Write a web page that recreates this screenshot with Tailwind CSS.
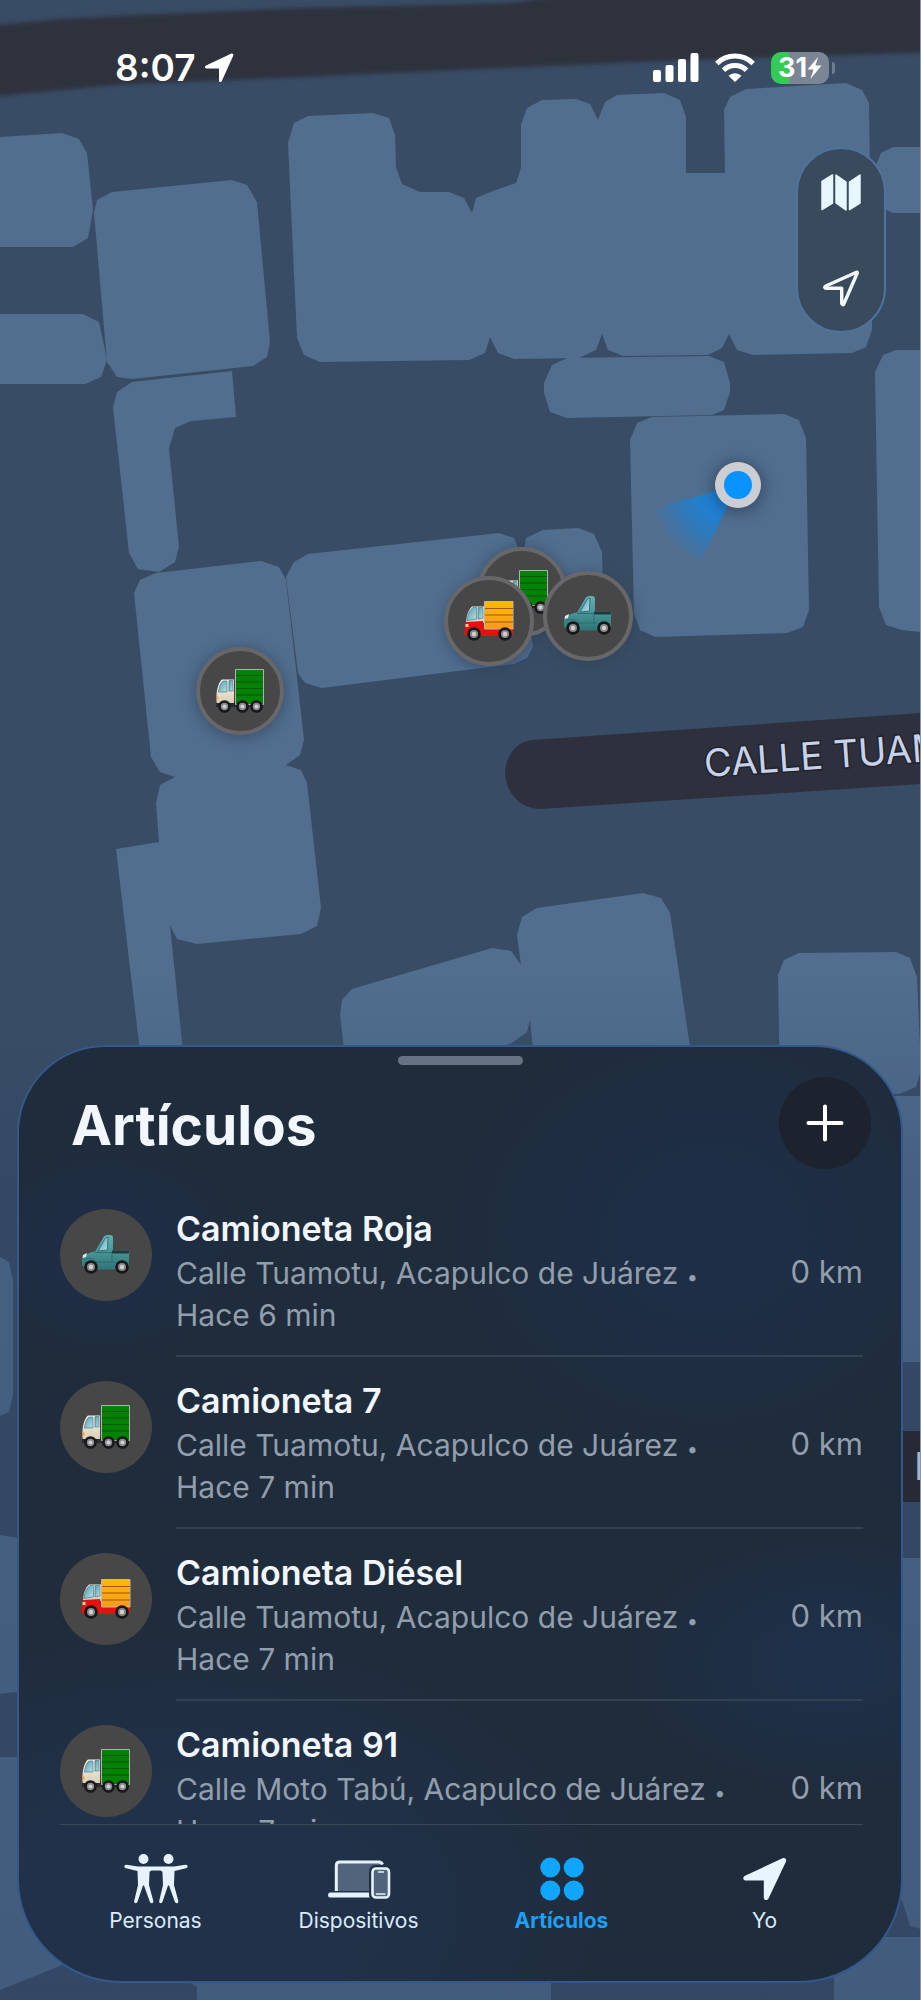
<!DOCTYPE html>
<html lang="es">
<head>
<meta charset="utf-8">
<meta name="viewport" content="width=device-width, initial-scale=1">
<title>Artículos</title>
<script src="https://cdn.jsdelivr.net/npm/@tailwindcss/browser@4"></script>
</head>
<body class="bg-[#384d65] font-['Inter',sans-serif]">

<!-- Shared vehicle drawings -->
<svg class="absolute size-0" aria-hidden="true">
  <defs>
    <linearGradient id="glass" x1="0" y1="0" x2="1" y2="1"><stop offset="0" stop-color="#4f9bb0"/><stop offset="1" stop-color="#b5e2ea"/></linearGradient>
    <linearGradient id="cream" x1="0" y1="0" x2="0" y2="1"><stop offset="0" stop-color="#f7f3e6"/><stop offset="1" stop-color="#d9cfb8"/></linearGradient>
    <linearGradient id="teal" x1="0" y1="0" x2="0" y2="1"><stop offset="0" stop-color="#5fb3b5"/><stop offset="1" stop-color="#2f7476"/></linearGradient>
    <linearGradient id="amber" x1="0" y1="0" x2="0" y2="1"><stop offset="0" stop-color="#ffb80a"/><stop offset="1" stop-color="#f79a1c"/></linearGradient>
    <symbol id="wheel" viewBox="0 0 14 14">
      <circle cx="7" cy="7" r="6.8" fill="#17181a"/><circle cx="7" cy="7" r="4" fill="#8a8a8e"/><circle cx="7" cy="7" r="2.2" fill="#cfcfd2"/>
    </symbol>
    <symbol id="truck-green" viewBox="0 0 50 44">
      <path d="M1 32h47v6H1z" fill="#2a2b2e"/>
      <path d="M20.500 .5h28v35h-28z" fill="#058205" stroke="#a9b5a9"/>
      <path d="M21 6.500h27M21 13h27M21 19.500h27M21 26h27" stroke="#04560a" stroke-width="1"/>
      <path d="M7 10.500h12V34H1.500v-9C2 19 4 13 7 10.500z" fill="url(#cream)"/>
      <path d="M8 12h4v11H3.500C4 18 5.500 14 8 12z" fill="url(#glass)" stroke="#3a6f7c" stroke-width=".6"/>
      <path d="M14 11.500h4V22h-4z" fill="url(#glass)" stroke="#3a6f7c" stroke-width=".6"/>
      <path d="M1.500 27l2.500 1.500-2.500 3z" fill="#f39a3a"/>
      <use href="#wheel" x="3" y="31" width="13" height="13"/>
      <use href="#wheel" x="21" y="31" width="13" height="13"/>
      <use href="#wheel" x="35" y="31" width="13" height="13"/>
    </symbol>
    <symbol id="truck-orange" viewBox="0 0 50 44">
      <path d="M8 7.500h12V24H2c0-6 2-13 6-16.500z" fill="url(#cream)"/>
      <path d="M9 8.500h3.500V20L2.800 21.500C3.500 16 5.500 11 9 8.500z" fill="url(#glass)" stroke="#3a6f7c" stroke-width=".6"/>
      <path d="M14 8.500h5V19l-5 1z" fill="url(#glass)" stroke="#3a6f7c" stroke-width=".6"/>
      <path d="M2 23l17-1 1 7h29v6l-2 2H3l-3-2z" fill="#e31212"/>
      <path d="M1.500 25h3v3h-3z" fill="#f6c9a0"/>
      <path d="M20.500 2.500h28.500v27.500h-28.500z" fill="url(#amber)" stroke="#c9b39a"/>
      <path d="M21 9.500h28M21 16h28M21 23h28" stroke="#9a5a06" stroke-width="1"/>
      <use href="#wheel" x="3" y="28" width="14" height="14"/>
      <use href="#wheel" x="34" y="28" width="14" height="14"/>
    </symbol>
    <symbol id="pickup" viewBox="0 0 50 44">
      <path d="M14 18.500L22 5c1-1.800 2.500-3 5-3h2c2 0 3 1 3 3v12.500h16.500l.5 2-1 2v10l-2 5H5l-4-4v-6c1-4 5-6.500 13-8z" fill="url(#teal)"/>
      <path d="M17 18L23.500 6.500c1-1.500 2-2.500 3.500-2.500l-.7 13z" fill="url(#glass)" stroke="#2b6062" stroke-width=".8"/>
      <path d="M31 17.500h17.500v3H31z" fill="#1f3b3d"/>
      <path d="M14 19.500h17v10M3 27c4-3 10-2 12 2h19" fill="none" stroke="#2c6a6c" stroke-width=".9"/>
      <path d="M2 22l4-2-1 4-3.500 1z" fill="#d8eef0"/>
      <use href="#wheel" x="3" y="27" width="14" height="14"/>
      <use href="#wheel" x="34" y="27" width="14" height="14"/>
    </symbol>
  </defs>
</svg>

<main class="relative flex min-h-screen flex-col overflow-hidden">

  <!-- Map canvas -->
  <svg class="absolute inset-0 h-full w-full" viewBox="0 0 921 2000" preserveAspectRatio="xMidYMin slice" role="img" aria-label="Mapa">
    <defs>
      <linearGradient id="dim" x1="0" y1="0" x2="0" y2="1"><stop offset="0" stop-color="#2b3f63" stop-opacity="0"/><stop offset=".2" stop-color="#2b3f63" stop-opacity=".3"/><stop offset="1" stop-color="#2b3f63" stop-opacity=".38"/></linearGradient>
      <radialGradient id="beam" gradientUnits="userSpaceOnUse" cx="738" cy="485" r="92"><stop offset=".25" stop-color="#1488e8" stop-opacity=".95"/><stop offset=".65" stop-color="#1c7fd0" stop-opacity=".65"/><stop offset="1" stop-color="#2a7cc4" stop-opacity="0"/></radialGradient>
      <filter id="soft" x="-40%" y="-40%" width="180%" height="180%"><feGaussianBlur stdDeviation="7"/></filter>
      <filter id="haze"><feGaussianBlur stdDeviation="2"/></filter>
    </defs>
    <rect width="921" height="2000" fill="#384d65"/>
    <path d="M-10 26L60 19L138 15L300 8L511 3L600-10H940V52L640 62L235 80L117 85L-10 97z" fill="#2e323e" filter="url(#haze)"/>

    <g fill="#516e8f">
      <path d="M0 137L62 133L79 139L87 153L93 210L88 238L73 247H0z"/>
      <path d="M112 192L232 180L247 185L257 202L270 342L267 357L253 366L132 379L117 377L107 362L94 213L97 200z"/>
      <path d="M0 314H83L99 322L107 360L101 377L85 384H0z"/>
      <path d="M132 382L232 371L236 417L191 421L175 428L169 448L179 547L175 562L159 572L138 569L129 553L113 407L117 392z"/>
      <path d="M294 123L308 116L373 113L389 118L395 135L396 167L402 184L420 192H449L464 198L472 213L476 198L493 191L516 183L521 168V125L527 108L542 100L576 99L590 104L598 120L605 102L617 95L664 93L680 100L686 117V173H725L724 110L730 97L746 89L846 83L862 90L869 103L872 330L866 347L852 353L753 355L737 350L729 334L722 348L708 355L623 356L608 350L602 334L596 350L579 358L514 359L498 353L490 337L485 353L469 360L320 362L304 355L297 338L288 143z"/>
      <path d="M876 165L881 153L893 147H921V213H893L876 205z"/>
      <path d="M552 365L567 358L709 356L724 362L730 383V392L724 410L712 415L567 418L550 412L544 393V383z"/>
      <path d="M875 372L883 355L896 350H921V632L902 630L886 625L879 607z"/>
      <path d="M637 423L652 417L784 414L799 420L806 438L809 610L803 627L787 633L655 637L640 630L634 613L630 440z"/>
      <path d="M294 562L308 554L499 533L514 538L519 550L533 647L527 658L514 664L322 688L305 683L298 673L286 577z"/>
      <path d="M526 538L543 530L578 528L594 534L602 552L603 600L540 620L523 555z"/>
      <path d="M156 573L261 561L279 567L286 580L304 740L300 755L286 765L301 770L307 783L321 908L317 926L301 934L197 944L177 939L170 925L190 1120H148L116 849L159 842L156 803L160 785L175 777L160 772L151 757L134 593L140 580z"/>
      <path d="M352 989L492 948L511 951L521 965L517 935L522 917L537 908L643 893L661 898L670 913L692 1060L700 1100H538L530 1020L527 1032L512 1043L350 1100L340 1015L342 1000z"/>
      <path d="M778 975L784 960L799 953L896 952L910 958L917 977L921 1070L916 1087L899 1094H780z"/>
      <path d="M880 1096H921V1362H880z"/>
      <path d="M880 1558H921V1929L910 1926L902 1900H880z"/>
      <path d="M834 1937H921V2000H834z"/>
      <path d="M0 1257L9 1262L13 1280V1395L9 1412L0 1416z"/>
      <path d="M0 1535L30 1540V1690L0 1694z"/>
      <path d="M0 1757H60V1900L197 1987V2000H551V1950H100L0 1990z"/>
    </g>
    <path d="M0 1990L197 1987V2000H0z" fill="#384d65"/>
    <rect y="975" width="921" height="1025" fill="url(#dim)"/>

    <path d="M532 740L921 713V784L540 809C520 809 506 793 505 773C506 755 516 742 532 740z" fill="#2e313d"/>
    <text x="705" y="777" transform="rotate(-4 705 777)" font-family="Inter, sans-serif" font-size="38" fill="#c9d1e8" stroke="#20232c" stroke-width="3" paint-order="stroke">CALLE TUAMOTU</text>
    <path d="M880 1431H921V1502H880z" fill="#262a35"/>
    <text x="914" y="1480" font-family="Inter, sans-serif" font-size="38" fill="#aab2c8">M</text>

    <!-- Current position -->
    <path d="M738 485L655 508Q664 545 700 562z" fill="url(#beam)"/>
    <circle cx="738" cy="487" r="27" fill="#24364c" opacity=".5" filter="url(#soft)"/>
    <circle cx="738" cy="485" r="23" fill="#cdced4"/>
    <circle cx="738" cy="485" r="14" fill="#0a92ff"/>

    <!-- Vehicle pins -->
    <g fill="#2a3c52" opacity=".55" filter="url(#soft)">
      <circle cx="240" cy="693" r="46"/><circle cx="522" cy="592" r="46"/><circle cx="490" cy="624" r="46"/><circle cx="588" cy="618" r="46"/>
    </g>
    <g fill="#474748" stroke="#67676a" stroke-width="4">
      <circle cx="240" cy="691" r="42"/>
      <circle cx="522" cy="592" r="43"/>
    </g>
    <use href="#truck-green" x="215" y="669" width="50" height="44"/>
    <use href="#truck-green" x="499" y="570" width="50" height="44"/>
    <circle cx="489" cy="621" r="43" fill="#474748" stroke="#67676a" stroke-width="4"/>
    <use href="#truck-orange" x="464" y="599" width="50" height="44"/>
    <circle cx="588" cy="616" r="43" fill="#474748" stroke="#67676a" stroke-width="4"/>
    <use href="#pickup" x="563" y="594" width="50" height="44"/>
    <rect x="920" width="1" height="2000" fill="#8796aa"/>
  </svg>

  <!-- Status bar -->
  <header class="relative flex items-center justify-between pt-[46px] pr-[86px] pl-[115px] text-white">
    <div class="flex h-11 items-center gap-2">
      <time class="text-[37px] leading-[44px] font-semibold">8:07</time>
      <svg class="h-[30px] w-[30px]" viewBox="0 0 30 30" fill="#fff"><path d="M27 .8c1.600-.7 2.800.5 2.200 2L17.800 28c-.7 1.600-2.800 1.400-2.800-.5V15.500H2.500c-2 0-2.200-2.100-.5-2.900z"/></svg>
    </div>
    <div class="flex h-11 items-center gap-4">
      <svg class="h-[30px] w-[46px]" viewBox="0 0 46 30" fill="#fff"><rect y="17" width="8" height="12" rx="2"/><rect x="12.500" y="12" width="8" height="17" rx="2"/><rect x="25" y="6" width="8" height="23" rx="2"/><rect x="37.500" y="0" width="8" height="29" rx="2"/></svg>
      <svg class="h-[30px] w-10" viewBox="0 0 40 30" fill="none" stroke="#fff" stroke-width="5"><path d="M1.800 10.500a26 26 0 0 1 36.400 0"/><path d="M8.500 17.200a16.500 16.500 0 0 1 23 0"/><path d="M20 29l-6.500-6.300a9.500 9.500 0 0 1 13 0z" fill="#fff" stroke="none"/></svg>
      <div class="flex items-center gap-[3px]">
        <div class="flex h-8 w-[58px] items-center justify-center rounded-[10px] bg-[linear-gradient(90deg,#32cb55_31%,#7b8594_31%)] text-[27px] leading-8 font-bold">31<svg class="h-[22px] w-[15px]" viewBox="0 0 15 22" fill="#fff"><path d="M11 0L.5 12.500H6.500L3.500 22L14.500 8.500H8.500z"/></svg></div>
        <div class="h-3 w-[3px] rounded-r-full bg-[#6f7c8e]"></div>
      </div>
    </div>
  </header>

  <!-- Map controls -->
  <div class="relative mt-[57px] mr-[35px] flex w-[90px] flex-col gap-[10px] self-end rounded-full border-2 border-[#4d739e] bg-[#394a5c]">
    <button type="button" aria-label="Tipo de mapa" class="flex h-[86px] items-center justify-center">
      <svg class="h-[37px] w-10" viewBox="0 0 40 37" fill="#e8f6ff" stroke="#e8f6ff" stroke-width="1.500" stroke-linejoin="round"><path d="M1 7.500L11.500 1V29L1 35.500z"/><path d="M15 1L25 8V36L15 29z"/><path d="M28.500 8L39 1V29L28.500 35.500z"/></svg>
    </button>
    <button type="button" aria-label="Mi ubicación" class="flex h-[86px] items-center justify-center">
      <svg class="h-[37px] w-9" viewBox="0 0 36 37" fill="none" stroke="#f1f8ff" stroke-width="3.400" stroke-linejoin="round"><path d="M33.500 2.300C34.300 2 34.500 2.500 34.200 3.300L21 33.500C20.300 35.200 18.700 35 18.700 33.200V18.300H3.200C1.500 18.300 1.200 16.800 2.800 16z"/></svg>
    </button>
  </div>

  <!-- Bottom sheet -->
  <section class="relative mr-[18px] ml-[17px] mt-auto mb-[17px] flex flex-col overflow-hidden rounded-t-[88px] rounded-b-[104px] border-2 border-[#34588a] bg-[#1f2c3c] bg-[radial-gradient(ellipse_30%_24%_at_78%_20%,#1e2e46_30%,transparent),radial-gradient(ellipse_16%_12%_at_10%_22%,#1e2e47_20%,transparent),radial-gradient(ellipse_50%_30%_at_18%_92%,#203149_40%,transparent),radial-gradient(ellipse_24%_14%_at_92%_66%,#1e3049_20%,transparent)]">
    <div class="mx-auto mt-[9px] h-[9px] w-[125px] rounded-full bg-[#677384]"></div>
    <div class="mt-3 mb-4 flex items-center justify-between pr-[30px] pl-[52px]">
      <h1 class="pt-1 text-[55px] leading-[68px] font-bold text-[#f2f6ff]">Artículos</h1>
      <button type="button" aria-label="Agregar" class="flex size-[92px] items-center justify-center rounded-full bg-[#1c232e]">
        <svg class="size-[38px]" viewBox="0 0 38 38" stroke="#fff" stroke-width="4" stroke-linecap="round"><path d="M19 2.500V35.500M2.500 19H35.500"/></svg>
      </button>
    </div>

    <ul class="max-h-[639px] overflow-y-auto pr-[38px] pl-[41px] [scrollbar-width:none]">
      <li class="flex gap-6">
        <span class="mt-6 flex size-[92px] shrink-0 items-center justify-center rounded-full bg-[#474748]"><svg class="h-11 w-[50px]"><use href="#pickup"/></svg></span>
        <div class="flex grow items-center justify-between border-b-2 border-[#334152] pt-[23px] pb-[19px]">
          <div>
            <h2 class="text-[34px] leading-[42px] font-semibold text-[#f2f6ff]">Camioneta Roja</h2>
            <p class="mt-0.5 text-[30px] leading-[42px] text-[#939eac]">Calle Tuamotu, Acapulco de Juárez <span class="text-xl">•</span><br>Hace 6 min</p>
          </div>
          <span class="text-[31px] leading-[42px] whitespace-nowrap text-[#939eac]">0 km</span>
        </div>
      </li>
      <li class="flex gap-6">
        <span class="mt-6 flex size-[92px] shrink-0 items-center justify-center rounded-full bg-[#474748]"><svg class="h-11 w-[50px]"><use href="#truck-green"/></svg></span>
        <div class="flex grow items-center justify-between border-b-2 border-[#334152] pt-[23px] pb-[19px]">
          <div>
            <h2 class="text-[34px] leading-[42px] font-semibold text-[#f2f6ff]">Camioneta 7</h2>
            <p class="mt-0.5 text-[30px] leading-[42px] text-[#939eac]">Calle Tuamotu, Acapulco de Juárez <span class="text-xl">•</span><br>Hace 7 min</p>
          </div>
          <span class="text-[31px] leading-[42px] whitespace-nowrap text-[#939eac]">0 km</span>
        </div>
      </li>
      <li class="flex gap-6">
        <span class="mt-6 flex size-[92px] shrink-0 items-center justify-center rounded-full bg-[#474748]"><svg class="h-11 w-[50px]"><use href="#truck-orange"/></svg></span>
        <div class="flex grow items-center justify-between border-b-2 border-[#334152] pt-[23px] pb-[19px]">
          <div>
            <h2 class="text-[34px] leading-[42px] font-semibold text-[#f2f6ff]">Camioneta Diésel</h2>
            <p class="mt-0.5 text-[30px] leading-[42px] text-[#939eac]">Calle Tuamotu, Acapulco de Juárez <span class="text-xl">•</span><br>Hace 7 min</p>
          </div>
          <span class="text-[31px] leading-[42px] whitespace-nowrap text-[#939eac]">0 km</span>
        </div>
      </li>
      <li class="flex gap-6">
        <span class="mt-6 flex size-[92px] shrink-0 items-center justify-center rounded-full bg-[#474748]"><svg class="h-11 w-[50px]"><use href="#truck-green"/></svg></span>
        <div class="flex grow items-center justify-between pt-[23px] pb-[19px]">
          <div>
            <h2 class="text-[34px] leading-[42px] font-semibold text-[#f2f6ff]">Camioneta 91</h2>
            <p class="mt-0.5 text-[30px] leading-[42px] text-[#939eac]">Calle Moto Tabú, Acapulco de Juárez <span class="text-xl">•</span><br>Hace 7 min</p>
          </div>
          <span class="text-[31px] leading-[42px] whitespace-nowrap text-[#939eac]">0 km</span>
        </div>
      </li>
    </ul>

    <div class="mr-[38px] ml-[41px] h-px bg-[#3a4858]"></div>
    <nav class="grid grid-cols-4 px-[35px] pt-[27px] pb-[46px] text-[21px] leading-7 text-[#dcebfb]">
      <a href="#personas" class="flex flex-col items-center gap-[3px]">
        <svg class="h-[52px] w-16" viewBox="0 0 64 52" fill="#e6f3ff">
          <circle cx="19.500" cy="7" r="5"/><circle cx="44.500" cy="7" r="5"/>
          <path d="M2.300 12.800L14 14.500H50L61.500 12.800C64 12.600 64.300 15.800 62 16.300L50.500 19L50 33L54.300 49C54.700 51.500 51.500 52 50.800 49.800L45 33.500H44L38.500 49.800C37.800 52 34.600 51.300 35.200 49L39 33L38.500 21C38.500 19.800 37.500 18.500 36 18.500H28C26.500 18.500 25.500 19.800 25.500 21L25 33L29.300 49C29.700 51.500 26.500 52 25.800 49.800L20 33.500H19L13.500 49.800C12.800 52 9.600 51.300 10.200 49L14 33L13.500 19L2 16.300C-.3 15.800 0 12.600 2.300 12.800z"/>
        </svg>
        Personas
      </a>
      <a href="#dispositivos" class="flex flex-col items-center gap-[3px]">
        <svg class="h-[52px] w-16" viewBox="0 0 64 52">
          <path d="M9.300 39V13.500Q9.300 10 12.800 10H52Q55 10 55.500 13L46 18V39z" fill="#52647c"/>
          <path d="M9.300 39V13.500Q9.300 10 12.800 10H52Q54.500 10 55.500 12.500" fill="none" stroke="#e6f3ff" stroke-width="3"/>
          <path d="M3 40.500H42.500V45.500H3Q1 45.500 1 43T3 40.500z" fill="#e6f3ff"/>
          <rect x="42" y="13" width="22" height="35" rx="6" fill="#203147"/>
          <rect x="45.500" y="16.500" width="16.500" height="29" rx="3.500" fill="#52647c" stroke="#e6f3ff" stroke-width="2.600"/>
          <path d="M51.500 20H56.500M49.500 42H58" stroke="#e6f3ff" stroke-width="1.600" stroke-linecap="round"/>
        </svg>
        Dispositivos
      </a>
      <a href="#articulos" aria-current="page" class="flex flex-col items-center gap-[3px] font-bold text-[#1ba0f5]">
        <svg class="h-[52px] w-16" viewBox="0 0 64 52" fill="#10a5ff"><circle cx="20.300" cy="15.500" r="10"/><circle cx="43.700" cy="15.500" r="10"/><circle cx="20.300" cy="38.500" r="10"/><circle cx="43.700" cy="38.500" r="10"/></svg>
        Artículos
      </a>
      <a href="#yo" class="flex flex-col items-center gap-[3px]">
        <svg class="h-[52px] w-16" viewBox="0 0 64 52" fill="#e8f4ff"><path d="M49.500 6.200C52 5.200 54 7.200 53 9.500L35.500 46.500C34.300 49 30.800 48.500 30.800 45.500V28.500H12.500C9.800 28.500 9.500 25 12 23.800z"/></svg>
        Yo
      </a>
    </nav>
  </section>
</main>
</body>
</html>
